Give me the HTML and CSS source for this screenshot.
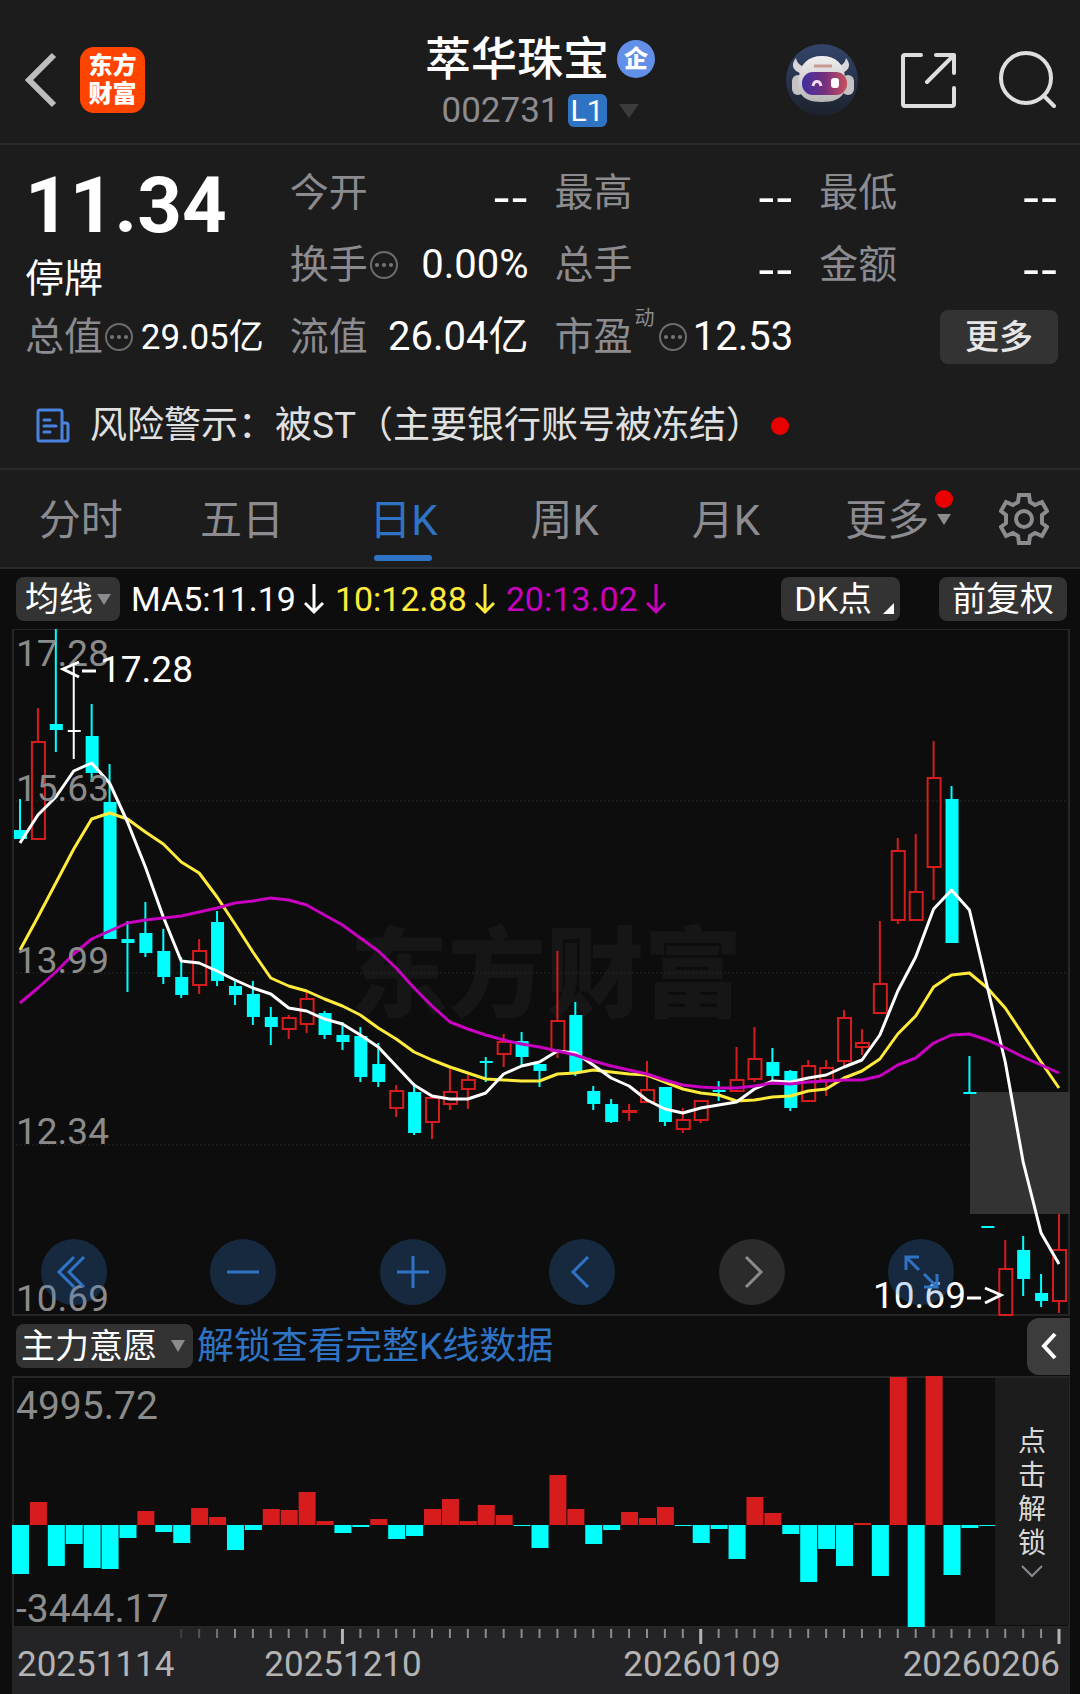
FILE: index.html
```html
<!DOCTYPE html>
<html lang="zh-CN">
<head>
  <meta charset="utf-8">
  <meta name="viewport" content="width=device-width, initial-scale=1">
  <title>萃华珠宝 002731</title>
  <link rel="stylesheet" href="styles.css">
</head>
<body>
<header class="topbar">
  <div class="topbar-left">
    <button class="icon-btn" aria-label="返回">
      <svg width="34" height="56" viewBox="0 0 34 56" fill="none" stroke="#bdbdbd" stroke-width="6"><path d="M30 3L5 28l25 25"/></svg>
    </button>
    <a class="logo" href="#"><span>东方</span><span>财富</span></a>
  </div>
  <div class="stock">
    <h1>萃华珠宝 <span class="corp">企</span></h1>
    <button class="code">002731 <span class="level">L1</span>
      <svg width="20" height="14" viewBox="0 0 20 14"><path d="M0 0h20L10 14z" fill="#3c3c3c"/></svg>
    </button>
  </div>
  <div class="topbar-right">
    <button class="icon-btn" aria-label="智能助手">
      <svg width="72" height="72" viewBox="0 0 72 72">
        <defs>
          <linearGradient id="sky" x1="0" y1="0" x2="0" y2="1"><stop offset="0" stop-color="#33456b"/><stop offset="1" stop-color="#1c222c"/></linearGradient>
          <linearGradient id="visor" x1="0" y1="0" x2="1" y2="0"><stop offset="0" stop-color="#3f2fa0"/><stop offset=".5" stop-color="#74307f"/><stop offset="1" stop-color="#c8505c"/></linearGradient>
          <linearGradient id="helmet" x1="0" y1="0" x2="0" y2="1"><stop offset="0" stop-color="#f0eeee"/><stop offset="1" stop-color="#b9b6b8"/></linearGradient>
        </defs>
        <circle cx="36" cy="36" r="36" fill="url(#sky)"/>
        <path d="M10 14c-5 6-4 12 4 15l6-6c-6-1-9-4-10-9zM60 14c5 6 4 12-4 15l-6-6c6-1 9-4 10-9z" fill="#d8d6d8"/>
        <rect x="6" y="31" width="12" height="20" rx="6" fill="#c4c2c5"/>
        <rect x="56" y="31" width="12" height="20" rx="6" fill="#c4c2c5"/>
        <path d="M36 12c14 0 22 8 23 21 2 14-1 25-23 25s-25-11-23-25c1-13 9-21 23-21z" fill="url(#helmet)"/>
        <rect x="16" y="28" width="45" height="23" rx="11" fill="url(#visor)"/>
        <path d="M28 22h18" stroke="#c99a94" stroke-width="3"/>
        <path d="M27 42c1-6 7-6 8 0" stroke="#f1dcf4" stroke-width="3" fill="none"/>
        <rect x="45" y="34" width="8" height="10" rx="3" fill="#fff"/>
      </svg>
    </button>
    <button class="icon-btn" aria-label="分享">
      <svg width="56" height="56" viewBox="0 0 56 56" fill="none" stroke="#dedede" stroke-width="4" stroke-linecap="round" stroke-linejoin="round"><path d="M21 3H5a2 2 0 0 0-2 2v47a2 2 0 0 0 2 2h47a2 2 0 0 0 2-2V36M36 3h18v18M54 3L27 30"/></svg>
    </button>
    <button class="icon-btn" aria-label="搜索">
      <svg width="58" height="58" viewBox="0 0 58 58" fill="none" stroke="#dedede" stroke-width="4" stroke-linecap="round"><circle cx="28" cy="27" r="25"/><path d="M46 45l10 10"/></svg>
    </button>
  </div>
</header>

<section class="quote">
  <div class="price"><strong>11.34</strong><span>停牌</span></div>
  <div class="cell"><span class="label">今开</span><span class="value empty">--</span></div>
  <div class="cell"><span class="label">最高</span><span class="value empty">--</span></div>
  <div class="cell"><span class="label">最低</span><span class="value empty">--</span></div>
  <div class="cell"><span class="label">换手<svg class="info"><use href="#dots"/></svg></span><span class="value">0.00%</span></div>
  <div class="cell"><span class="label">总手</span><span class="value empty">--</span></div>
  <div class="cell"><span class="label">金额</span><span class="value empty">--</span></div>
  <div class="cell"><span class="label">总值<svg class="info"><use href="#dots"/></svg></span><span class="value small">29.05亿</span></div>
  <div class="cell"><span class="label">流值</span><span class="value">26.04亿</span></div>
  <div class="cell"><span class="label">市盈<sup>动</sup><svg class="info"><use href="#dots"/></svg></span><span class="value">12.53</span></div>
  <div class="cell end"><button class="more">更多</button></div>
</section>

<a class="alert" href="#">
  <svg width="34" height="36" viewBox="0 0 34 36" fill="none" stroke="#4a82e0" stroke-width="3" stroke-linejoin="round" stroke-linecap="round"><path d="M26 33H4a2 2 0 0 1-2-2V4a2 2 0 0 1 2-2h20a2 2 0 0 1 2 2v29M26 15h4a2 2 0 0 1 2 2v14a2 2 0 0 1-2 2h-4M8 12h6M8 18h12M8 24h6"/></svg>
  <span>风险警示：被ST（主要银行账号被冻结）</span>
  <i class="dot"></i>
</a>

<nav class="tabs">
  <button>分时</button>
  <button>五日</button>
  <button class="active">日K</button>
  <button>周K</button>
  <button>月K</button>
  <button class="tab-more">更多<i class="dot"></i></button>
  <button class="settings" aria-label="设置">
    <svg width="50" height="52" viewBox="-25 -26 50 52" fill="none" stroke="#8b8b90" stroke-width="4"><path d="M-5-24H5L6-17 11-14 18-17 23-8 18-4V4L23 8 18 17 11 14 6 17 5 24H-5L-6 17-11 14-18 17-23 8-18 4V-4L-23-8-18-17-11-14-6-17z"/><circle r="8"/></svg>
  </button>
</nav>

<main class="board">
  <div class="toolbar">
    <button class="chip avg">均线<svg width="14" height="11" viewBox="0 0 14 11"><path d="M0 0h14L7 11z" fill="#8b8b90"/></svg></button>
    <span class="ma ma5">MA5:11.19<svg class="down"><use href="#down"/></svg></span>
    <span class="ma ma10">10:12.88<svg class="down"><use href="#down"/></svg></span>
    <span class="ma ma20">20:13.02<svg class="down"><use href="#down"/></svg></span>
    <button class="chip dk">DK点</button>
    <button class="chip">前复权</button>
  </div>

  <div class="kline">
    <svg class="plot" id="kline" viewBox="12 629 1058 687">
      <text class="watermark" x="350" y="1009">东方财富</text>
      <rect class="frame" x="13" y="629" width="1056" height="686"/>
      <path class="grid" d="M12 801H1070M12 973H1070M12 1145H1070"/>
      <rect x="970" y="1092" width="100" height="122" fill="#333"/>
      <g id="candles"></g>
      <g class="scale">
        <text x="16" y="666">17.28</text>
        <text x="16" y="801">15.63</text>
        <text x="16" y="973">13.99</text>
        <text x="16" y="1144">12.34</text>
        <text x="16" y="1311">10.69</text>
      </g>
      <g class="mark">
        <path d="M79 662L63 669l16 8M82 671h14"/>
        <text x="100" y="682">17.28</text>
        <text x="873" y="1308">10.69</text>
        <path d="M967 1298h14M985 1288l16 7-16 8"/>
      </g>
    </svg>
    <div class="controls">
      <button aria-label="最早"><svg viewBox="0 0 66 66"><path d="M33 18L18 33l15 15M43 18L28 33l15 15"/></svg></button>
      <button aria-label="缩小"><svg viewBox="0 0 66 66"><path d="M17 33h32"/></svg></button>
      <button aria-label="放大"><svg viewBox="0 0 66 66"><path d="M17 33h32M33 17v32"/></svg></button>
      <button aria-label="向左"><svg viewBox="0 0 66 66"><path d="M39 18L24 33l15 15"/></svg></button>
      <button class="off" aria-label="向右"><svg viewBox="0 0 66 66"><path d="M27 18l15 15-15 15"/></svg></button>
      <button aria-label="全屏"><svg viewBox="0 0 66 66"><path d="M18 31V18h13M18 18l13 13M36 48h13V35M49 48L36 35"/></svg></button>
    </div>
  </div>

  <div class="toolbar sub">
    <button class="chip will">主力意愿<svg width="14" height="12" viewBox="0 0 14 12"><path d="M0 0h14L7 12z" fill="#8b8b90"/></svg></button>
    <a class="unlock" href="#">解锁查看完整K线数据</a>
    <button class="collapse" aria-label="收起"><svg width="18" height="28" viewBox="0 0 18 28" fill="none" stroke="#fff" stroke-width="4"><path d="M15 2L4 14l11 12"/></svg></button>
  </div>

  <div class="intent">
    <svg class="plot" viewBox="12 1376 1058 251">
      <rect class="frame" x="13" y="1377" width="1056" height="250"/>
      <g id="bars"></g>
      <g class="scale large">
        <text x="16" y="1419">4995.72</text>
        <text x="16" y="1622">-3444.17</text>
      </g>
    </svg>
    <button class="locked">
      <span>点</span><span>击</span><span>解</span><span>锁</span>
      <svg width="22" height="13" viewBox="0 0 22 13" fill="none" stroke="#8b8b90" stroke-width="2"><path d="M1 1l10 10L21 1"/></svg>
    </button>
  </div>

  <svg class="plot axis" viewBox="12 1627 1058 67">
    <g id="ticks"></g>
    <text x="17" y="1676">20251114</text>
    <text x="343" y="1676" text-anchor="middle">20251210</text>
    <text x="702" y="1676" text-anchor="middle">20260109</text>
    <text x="1060" y="1676" text-anchor="end">20260206</text>
  </svg>
</main>

<svg class="sprite" aria-hidden="true">
  <symbol id="dots" viewBox="0 0 30 30">
    <circle cx="15" cy="15" r="13" fill="none" stroke="#6c6c6f" stroke-width="2"/>
    <circle cx="8" cy="15" r="2" fill="#77777a"/><circle cx="15" cy="15" r="2" fill="#77777a"/><circle cx="22" cy="15" r="2" fill="#77777a"/>
  </symbol>
  <symbol id="down" viewBox="0 0 20 32"><path d="M10 1v28M1 20l9 9 9-9" fill="none" stroke="currentColor" stroke-width="3"/></symbol>
</svg>
<script src="chart.js"></script>
</body>
</html>
```

FILE: styles.css
```css
* {
  box-sizing: border-box;
}

body {
  margin: 0;
  background: #0d0d0d;
  color: #fff;
  font-family: Roboto, "Noto Sans CJK SC", sans-serif;
  line-height: 1;
}

button {
  padding: 0;
  border: 0;
  background: none;
  color: inherit;
  font: inherit;
  cursor: pointer;
}

a {
  color: inherit;
  text-decoration: none;
}

svg {
  display: block;
  flex-shrink: 0;
}

.sprite {
  position: absolute;
  width: 0;
  height: 0;
}

/* top bar */
.topbar {
  display: grid;
  grid-template-columns: 1fr auto 1fr;
  align-items: center;
  height: 145px;
  padding: 16px 24px 0;
  background: #1c1c1c;
  border-bottom: 2px solid #2a2a2a;
}

.topbar-left,
.topbar-right {
  display: flex;
  align-items: center;
}

.topbar-left {
  gap: 22px;
}

.topbar-right {
  justify-content: flex-end;
  gap: 42px;
}

.logo {
  display: flex;
  flex-direction: column;
  align-items: center;
  justify-content: center;
  width: 65px;
  height: 66px;
  border-radius: 14px;
  background: #ff4400;
  font-size: 24px;
  font-weight: 900;
  line-height: 28px;
}

.stock {
  display: flex;
  flex-direction: column;
  align-items: center;
  gap: 6px;
  padding-top: 4px;
}

.stock h1 {
  display: flex;
  align-items: center;
  gap: 8px;
  margin: 0;
  font-size: 46px;
  font-weight: 500;
  line-height: 52px;
}

.corp {
  width: 38px;
  height: 38px;
  border-radius: 50%;
  background: #628fe8;
  font-size: 24px;
  font-weight: 900;
  line-height: 38px;
  text-align: center;
}

.code {
  display: flex;
  align-items: center;
  gap: 8px;
  color: #8b8b90;
  font-size: 35px;
  line-height: 40px;
}

.level {
  width: 39px;
  height: 33px;
  border-radius: 6px;
  background: #2f74c4;
  color: #fff;
  font-size: 30px;
  line-height: 33px;
}

.code svg {
  margin-left: 4px;
}

/* quote */
.quote {
  display: grid;
  grid-template-columns: repeat(4, 1fr);
  grid-auto-rows: 72px;
  column-gap: 26px;
  padding: 12px 22px 0 25px;
  background: #1c1c1c;
}

.price {
  grid-row: span 2;
  display: flex;
  flex-direction: column;
  font-size: 39px;
  line-height: 48px;
}

.price strong {
  font-size: 78px;
  font-weight: 700;
  line-height: 98px;
}

.cell {
  display: flex;
  align-items: center;
  justify-content: space-between;
}

.end {
  justify-content: flex-end;
}

.label {
  display: flex;
  align-items: center;
  color: #8b8b90;
  font-size: 39px;
}

.label sup {
  align-self: flex-start;
  margin: -10px 2px 0;
  font-size: 20px;
  line-height: 20px;
}

.info {
  width: 30px;
  height: 30px;
  margin-left: 1px;
}

.value {
  font-size: 40px;
}

.empty {
  font-family: "Noto Sans CJK SC", sans-serif;
  font-size: 52px;
}

.small {
  font-size: 35px;
}

.more {
  width: 118px;
  height: 54px;
  border-radius: 8px;
  background: #333;
  color: #e6e6e6;
  font-size: 34px;
  font-weight: 500;
}

/* risk notice */
.alert {
  display: flex;
  align-items: center;
  height: 97px;
  padding: 10px 36px 0;
  background: #1c1c1c;
  border-bottom: 2px solid #2a2a2a;
  color: #e0e0e0;
  font-size: 37px;
}

.alert span {
  margin-left: 20px;
}

.dot {
  width: 18px;
  height: 18px;
  border-radius: 50%;
  background: #eb0000;
}

.alert .dot {
  margin-left: 8px;
}

/* period tabs */
.tabs {
  display: flex;
  height: 99px;
  background: #1c1c1c;
  border-bottom: 2px solid #2a2a2a;
}

.tabs button {
  position: relative;
  flex: 1;
  padding-top: 4px;
  color: #8b8b90;
  font-size: 42px;
}

.tabs .active {
  color: #2f74c4;
}

.tabs .active::after {
  content: "";
  position: absolute;
  left: 50%;
  bottom: 6px;
  width: 58px;
  height: 6px;
  margin-left: -29px;
  border-radius: 3px;
  background: #2f74c4;
}

.tab-more .dot {
  position: absolute;
  top: 20px;
  right: 15px;
}

.tab-more::after {
  content: "";
  position: absolute;
  top: 44px;
  right: 17px;
  border: 7px solid transparent;
  border-top: 11px solid #8b8b90;
  border-bottom: 0;
}

.tabs .settings {
  display: flex;
  flex: 0 0 112px;
  align-items: center;
  justify-content: center;
  padding-top: 0;
}

/* charts */
.board {
  padding: 0 10px 0 12px;
}

.toolbar {
  display: flex;
  align-items: center;
  height: 60px;
  padding: 0 3px 0 4px;
}

.chip {
  display: flex;
  align-items: center;
  justify-content: center;
  height: 44px;
  padding: 0 13px;
  border-radius: 8px;
  background: #333;
  font-size: 34px;
}

.avg {
  gap: 4px;
  padding: 0 9px;
}

.ma {
  display: flex;
  align-items: center;
  gap: 8px;
  margin-left: 11px;
  font-size: 34px;
}

.ma10 {
  color: #ffeb3b;
}

.ma20 {
  color: #c800c0;
}

.down {
  width: 20px;
  height: 32px;
}

.dk {
  position: relative;
  margin: 0 39px 0 auto;
  padding-right: 28px;
}

.dk::after {
  content: "";
  position: absolute;
  right: 6px;
  bottom: 7px;
  border-left: 11px solid transparent;
  border-bottom: 11px solid #fff;
}

.plot {
  width: 100%;
  height: auto;
}

.frame {
  fill: none;
  stroke: #262626;
  stroke-width: 2;
}

.grid {
  stroke: #262626;
  stroke-dasharray: 2 2;
}

.watermark {
  fill: #161616;
  font-family: "Noto Sans CJK SC", sans-serif;
  font-size: 98px;
  font-weight: 900;
}

.scale {
  fill: #8b8b8b;
  font-size: 37px;
}

.large {
  font-size: 39px;
}

.mark {
  fill: #fff;
  font-size: 37px;
}

.mark path {
  fill: none;
  stroke: #fff;
  stroke-width: 3;
}

.line {
  fill: none;
  stroke-width: 3;
  stroke-linejoin: round;
}

.kline,
.intent {
  position: relative;
}

.controls {
  position: absolute;
  left: 29px;
  right: 116px;
  bottom: 11px;
  display: flex;
  justify-content: space-between;
}

.controls button {
  width: 66px;
  height: 66px;
  border-radius: 50%;
  background: rgba(57, 129, 217, 0.25);
}

.controls svg {
  fill: none;
  stroke: #2f74c4;
  stroke-width: 3;
}

.controls .off {
  background: #2b2b2b;
}

.off svg {
  stroke: #8b8b90;
}

.sub {
  padding-right: 0;
}

.will {
  gap: 14px;
  padding: 0 8px 0 5px;
}

.unlock {
  margin-left: 4px;
  color: #2f74c4;
  font-size: 37px;
}

.collapse {
  display: flex;
  align-items: center;
  justify-content: center;
  width: 43px;
  height: 57px;
  margin-left: auto;
  border-radius: 12px 0 0 12px;
  background: #3c3c3c;
}

.locked {
  position: absolute;
  top: 2px;
  right: 1px;
  bottom: 2px;
  display: flex;
  flex-direction: column;
  align-items: center;
  justify-content: center;
  width: 74px;
  background: #1c1c1c;
  color: #d8d8d8;
  font-size: 28px;
  line-height: 34px;
}

.locked svg {
  margin-top: 4px;
}

.axis {
  background: #242426;
  fill: #b4b4b4;
  font-size: 35px;
}
```

FILE: chart.js
```js
const STEP = 1039 / 58;
const UP = '#d61c1c';
const DOWN = '#00ffff';

// [kind, high, body top, body bottom, low], u = up, d = down, f = flat
const candles = [
  ['d', 799, 830, 839, 839], ['u', 708, 741, 839, 840], ['d', 629, 724, 730, 752],
  ['f', 666, 730, 730, 759], ['d', 704, 736, 773, 782], ['d', 764, 802, 939, 939],
  ['d', 921, 939, 943, 992], ['d', 902, 933, 953, 957], ['d', 929, 951, 977, 984],
  ['d', 957, 977, 995, 998], ['u', 939, 950, 985, 994], ['d', 911, 922, 981, 986],
  ['d', 980, 986, 995, 1005], ['d', 981, 994, 1017, 1025], ['d', 1007, 1017, 1027, 1045],
  ['u', 1015, 1017, 1029, 1039], ['u', 992, 998, 1024, 1033], ['d', 1011, 1013, 1035, 1039],
  ['d', 1022, 1035, 1042, 1050], ['d', 1027, 1036, 1077, 1082], ['d', 1043, 1064, 1082, 1087],
  ['u', 1085, 1090, 1108, 1117], ['d', 1083, 1092, 1133, 1135], ['u', 1097, 1097, 1122, 1139],
  ['u', 1067, 1091, 1104, 1110], ['u', 1075, 1079, 1089, 1109], ['d', 1057, 1061, 1061, 1082],
  ['u', 1034, 1041, 1054, 1067], ['d', 1032, 1041, 1057, 1065], ['d', 1064, 1064, 1071, 1087],
  ['u', 951, 1020, 1051, 1058], ['d', 1002, 1015, 1073, 1076], ['d', 1086, 1091, 1104, 1110],
  ['d', 1099, 1104, 1122, 1123], ['u', 1104, 1110, 1111, 1121], ['u', 1061, 1089, 1102, 1102],
  ['d', 1087, 1087, 1122, 1126], ['u', 1108, 1119, 1129, 1133], ['u', 1100, 1100, 1120, 1123],
  ['d', 1081, 1090, 1090, 1101], ['u', 1047, 1079, 1091, 1091], ['u', 1027, 1058, 1079, 1082],
  ['d', 1048, 1062, 1076, 1081], ['d', 1070, 1071, 1108, 1111], ['u', 1060, 1065, 1101, 1101],
  ['u', 1060, 1067, 1080, 1096], ['u', 1010, 1017, 1061, 1066], ['u', 1029, 1042, 1047, 1055],
  ['u', 921, 983, 1013, 1013], ['u', 838, 850, 920, 924], ['u', 834, 891, 920, 920],
  ['u', 741, 777, 867, 900], ['d', 786, 799, 943, 943], ['d', 1056, 1092, 1092, 1092],
  ['d', 1226, 1226, 1226, 1226], ['u', 1240, 1268, 1315, 1315], ['d', 1236, 1250, 1279, 1296],
  ['d', 1274, 1293, 1301, 1307], ['u', 1214, 1249, 1301, 1313]
];

const averages = {
  '#ffeb3b': [950, 917, 883, 849, 819, 813, 819, 832, 844, 862, 873, 897, 924, 952, 978, 986, 991, 999, 1006, 1015,
    1028, 1039, 1052, 1060, 1067, 1073, 1079, 1080, 1081, 1081, 1074, 1073, 1070, 1072, 1074, 1075, 1082, 1089, 1093, 1095,
    1101, 1100, 1097, 1096, 1091, 1089, 1078, 1071, 1059, 1034, 1016, 987, 975, 973, 988, 1008, 1035, 1062, 1088],
  '#ffffff': [843, 815, 797, 771, 763, 783, 822, 867, 917, 961, 963, 971, 980, 988, 994, 1008, 1011, 1019, 1024, 1035,
    1047, 1066, 1085, 1096, 1099, 1099, 1093, 1074, 1066, 1062, 1051, 1053, 1065, 1078, 1086, 1100, 1109, 1113, 1108, 1105,
    1102, 1089, 1081, 1082, 1078, 1075, 1067, 1060, 1035, 991, 957, 909, 890, 910, 987, 1062, 1162, 1233, 1264],
  '#c800c0': [1003, 988, 972, 954, 939, 931, 923, 920, 918, 916, 912, 908, 903, 901, 898, 900, 905, 915, 925, 938,
    951, 968, 988, 1006, 1022, 1029, 1035, 1040, 1044, 1047, 1051, 1055, 1061, 1066, 1070, 1074, 1080, 1085, 1087, 1088,
    1088, 1086, 1083, 1084, 1082, 1081, 1080, 1080, 1076, 1065, 1058, 1043, 1035, 1034, 1040, 1048, 1057, 1065, 1073]
};

const intent = [-49, 23, -41, -19, -43, -44, -13, 14, -7, -18, 17, 8, -25, -5, 16, 15, 33, 4, -8, -2,
  6, -14, -11, 16, 26, 4, 20, 10, -1, -23, 50, 16, -19, -5, 13, 7, 18, -1, -18, -4,
  -34, 28, 12, -9, -57, -24, -41, 2, -51, 148, -102, 149, -50, -3, -1];

function centre(i) {
  return 20 + STEP * i;
}

function drawCandles() {
  let out = '';
  candles.forEach(([kind, high, top, bottom, low], i) => {
    const x = centre(i);
    const color = kind === 'u' ? UP : kind === 'd' ? DOWN : '#fff';
    out += `<path d="M${x} ${high}V${top}M${x} ${bottom}V${low}" stroke="${color}" stroke-width="2"/>`;
    if (kind === 'u') {
      out += `<rect x="${x - 6}" y="${top + 1}" width="13" height="${Math.max(bottom - top - 1, 1)}" fill="none" stroke="${color}" stroke-width="2"/>`;
    } else {
      out += `<rect x="${x - 6}" y="${top}" width="13" height="${Math.max(bottom - top, 2)}" fill="${color}"/>`;
    }
  });
  for (const color in averages) {
    const points = averages[color].map((y, i) => `${centre(i)},${y}`).join(' ');
    out += `<polyline class="line" points="${points}" stroke="${color}"/>`;
  }
  document.getElementById('candles').innerHTML = out;
}

function drawBars() {
  document.getElementById('bars').innerHTML = intent.map((v, i) =>
    `<rect x="${centre(i) - 8}" y="${v > 0 ? 1525 - v : 1525}" width="17" height="${Math.abs(v)}" fill="${v > 0 ? UP : DOWN}"/>`
  ).join('');
}

function drawTicks() {
  let out = '';
  for (let i = 9; i < 59; i++) {
    const major = i === 18 || i === 38 || i === 58;
    out += `<path d="M${centre(i)} 1629v${major ? 15 : 9}" stroke="${major ? '#b4b4b4' : '#8b8b8b'}" stroke-width="${major ? 3 : 2}" opacity="${Math.min((i - 8) / 4, 1)}"/>`;
  }
  document.getElementById('ticks').innerHTML = out;
}

drawCandles();
drawBars();
drawTicks();
```
